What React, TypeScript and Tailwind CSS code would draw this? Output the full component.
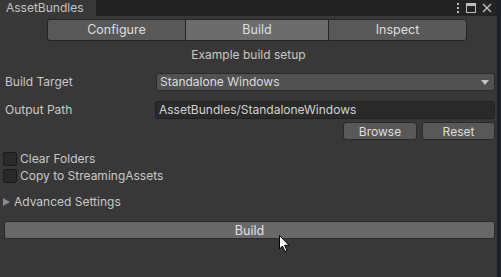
import { useState } from "react";

const font = { fontFamily: "Inter, 'Noto Sans', sans-serif" };

function Checkbox({ label }: { label: string }) {
  const [on, setOn] = useState(false);
  return (
    <label className="flex h-[17px] items-center gap-[3px] pl-[3px]" onClick={() => setOn(!on)}>
      <span className="h-[14px] w-[14px] rounded-[2px] border border-[#191919] bg-[#2a2a2a]" />
      <span className="text-[12px] text-[#c8c8c8]">{label}</span>
    </label>
  );
}

export default function App() {
  const [tab, setTab] = useState("Build");
  const tabs = ["Configure", "Build", "Inspect"];

  return (
    <div className="relative flex h-[277px] w-[501px] overflow-hidden bg-[#383838]" style={font}>
      <div className="flex w-[497px] flex-col">
        {/* title bar */}
        <div className="flex h-[16px] items-stretch bg-[#232323]">
          <div className="flex w-[96px] items-center bg-[#383838] pl-[6px] text-[12px] text-[#c4c4c4]">AssetBundles</div>
          <div className="flex-1" />
          <div className="flex items-center gap-[6px] pr-[5px] text-[#c4c4c4]">
            <svg width="4" height="12" viewBox="0 0 4 12">
              <rect x="1" y="1" width="2" height="2" fill="#bdbdbd" />
              <rect x="1" y="5" width="2" height="2" fill="#bdbdbd" />
              <rect x="1" y="9" width="2" height="2" fill="#bdbdbd" />
            </svg>
            <svg width="10" height="10" viewBox="0 0 10 10">
              <rect x="0.5" y="0.5" width="9" height="9" fill="none" stroke="#bdbdbd" />
              <rect x="0.5" y="0.5" width="9" height="2.5" fill="#bdbdbd" />
            </svg>
            <svg width="10" height="10" viewBox="0 0 10 10">
              <path d="M1 1 L9 9 M9 1 L1 9" stroke="#bdbdbd" strokeWidth="1.4" />
            </svg>
          </div>
        </div>

        {/* tabs */}
        <div className="flex pl-[47px] pt-[3px]">
          {tabs.map((t, i) => (
            <button
              key={t}
              onClick={() => setTab(t)}
              className={`h-[22px] border border-[#242424] text-[12.5px] text-[#dedede] ${
                i === 1 ? "w-[142px] border-x-0" : "w-[139px]"
              } ${i === 0 ? "rounded-l-[3px]" : ""} ${i === 2 ? "rounded-r-[3px]" : ""} ${
                tab === t ? "bg-[#6c6c6c]" : "bg-[#585858]"
              }`}
            >
              {t}
            </button>
          ))}
        </div>

        <div className="mt-[7px] h-[14px] text-center text-[12px] leading-[14px] text-[#c8c8c8]">Example build setup</div>

        {/* build target */}
        <div className="mt-[11px] flex h-[18px] items-center">
          <div className="w-[156px] pl-[5px] text-[12px] text-[#c8c8c8]">Build Target</div>
          <div className="mr-[2px] flex h-[18px] flex-1 items-center justify-between rounded-[3px] border border-[#2b2b2b] bg-[#515151] pl-[3px] pr-[5px] text-[12px] text-[#dcdcdc]">
            <span>Standalone Windows</span>
            <svg width="8" height="5" viewBox="0 0 8 5">
              <path d="M0 0 L8 0 L4 5 Z" fill="#c4c4c4" />
            </svg>
          </div>
        </div>

        {/* output path */}
        <div className="mt-[10px] flex h-[18px] items-center">
          <div className="w-[155px] pl-[5px] text-[12px] text-[#c8c8c8]">Output Path</div>
          <div className="mr-[2px] flex h-[18px] flex-1 items-center rounded-[3px] border border-[#212121] bg-[#2a2a2a] pl-[3px] text-[12px] text-[#d2d2d2]">
            AssetBundles/StandaloneWindows
          </div>
        </div>

        <div className="mt-[3px] flex h-[18px] justify-end gap-[5px] pr-[2px]">
          <button className="h-[18px] w-[74px] rounded-[3px] border border-[#2a2a2a] bg-[#585858] text-[12px] text-[#dcdcdc]">Browse</button>
          <button className="h-[18px] w-[73px] rounded-[3px] border border-[#2a2a2a] bg-[#585858] text-[12px] text-[#dcdcdc]">Reset</button>
        </div>

        <div className="mt-[10px] flex flex-col">
          <Checkbox label="Clear Folders" />
          <Checkbox label="Copy to StreamingAssets" />
        </div>

        <div className="mt-[10px] flex h-[16px] items-center gap-[4px] pl-[3px] text-[12px] text-[#c8c8c8]">
          <svg width="7" height="8" viewBox="0 0 7 8">
            <path d="M0 0 L7 4 L0 8 Z" fill="#8a8a8a" />
          </svg>
          <span>Advanced Settings</span>
        </div>

        <div className="mt-[11px] flex pl-[4px] pr-[2px]">
          <button className="h-[18px] flex-1 rounded-[3px] border border-[#2a2a2a] bg-[#686868] text-[12.5px] text-[#e2e2e2]">Build</button>
        </div>
      </div>
      <div className="w-[4px] bg-[#1c2029]" />

      {/* mouse cursor */}
      <svg className="absolute left-[279px] top-[235px]" width="12" height="18" viewBox="0 0 12 18">
        <path d="M0.5 0.5 L0.5 14 L3.5 11 L6 16.5 L8 15.5 L5.6 10.3 L10 10.3 Z" fill="#ffffff" stroke="#000000" strokeWidth="1" />
      </svg>
    </div>
  );
}
